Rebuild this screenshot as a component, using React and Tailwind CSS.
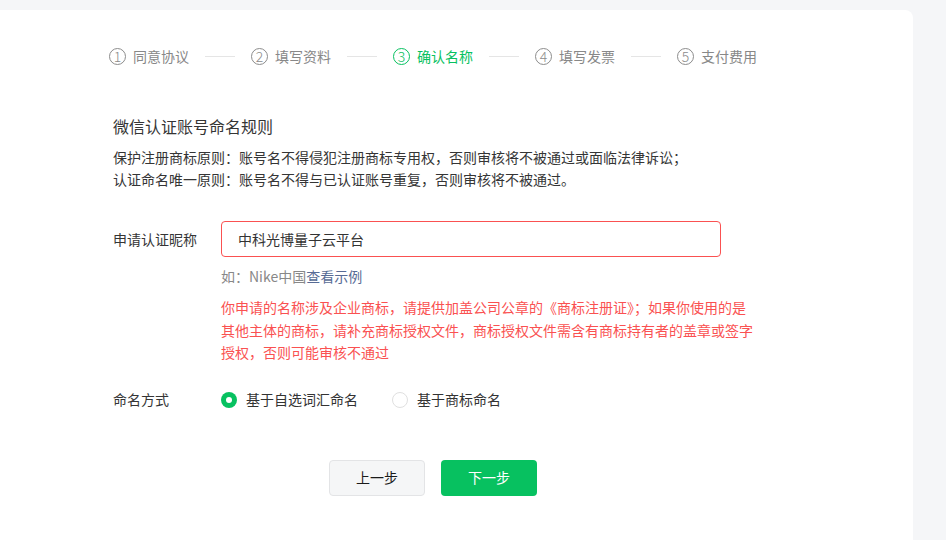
import React, { useState } from "react";

const steps = ["同意协议", "填写资料", "确认名称", "填写发票", "支付费用"];
const ACTIVE = 2;

const Steps = () => (
  <div className="flex items-center h-5">
    {steps.map((label, i) => {
      const active = i === ACTIVE;
      return (
        <div key={label} className="flex items-center">
          <span
            className={`flex items-center justify-center w-[17px] h-[17px] rounded-full border text-[14px] leading-none font-light ${
              active ? "border-[#07c160] text-[#07c160]" : "border-[#8c8c8c] text-[#8c8c8c]"
            }`}
          >
            {i + 1}
          </span>
          <span className={`ml-[7px] text-[14px] ${active ? "text-[#07c160]" : "text-[#888]"}`}>{label}</span>
          {i < steps.length - 1 && <span className="mx-4 w-[30px] h-px bg-[#e5e5e5]" />}
        </div>
      );
    })}
  </div>
);

const Radio = ({ checked, label, onClick }) => (
  <button onClick={onClick} className="flex items-center gap-[9px] text-[14px] text-[#333]">
    {checked ? (
      <span className="flex items-center justify-center w-4 h-4 rounded-full bg-[#07c160]">
        <span className="w-[6px] h-[6px] rounded-full bg-white" />
      </span>
    ) : (
      <span className="w-4 h-4 rounded-full border border-[#e0e0e0] bg-white" />
    )}
    {label}
  </button>
);

export default function App() {
  const [name, setName] = useState("中科光博量子云平台");
  const [mode, setMode] = useState("word");

  return (
    <div
      className="h-[540px] overflow-hidden bg-[#f5f6f8] pt-[10px] pr-[33px] flex"
      style={{ fontFamily: '"Noto Sans CJK SC", "Noto Sans", sans-serif' }}
    >
      <div className="flex-1 bg-white rounded-tr-[8px]">
        <div className="ml-[109px] w-[648px] pt-[36px]">
          <Steps />

          <div className="px-1">
            {/* 命名规则 */}
            <h2 className="mt-[48px] text-[16px] leading-6 text-[#353535]">微信认证账号命名规则</h2>
            <div className="mt-[8px] text-[14px] leading-[22px] text-[#353535]">
              <p>保护注册商标原则：账号名不得侵犯注册商标专用权，否则审核将不被通过或面临法律诉讼；</p>
              <p>认证命名唯一原则：账号名不得与已认证账号重复，否则审核将不被通过。</p>
            </div>

            {/* 昵称 */}
            <div className="mt-[31px] flex">
              <label className="w-[108px] text-[14px] leading-[36px] text-[#353535]">申请认证昵称</label>
              <div className="flex-1">
                <input
                  value={name}
                  onChange={(e) => setName(e.target.value)}
                  className="w-[500px] h-[36px] px-4 rounded-[4px] border border-[#fa5151] text-[14px] text-[#333] outline-none"
                />
                <p className="mt-[8px] text-[14px] leading-[22px] text-[#888]">
                  如：Nike中国<a className="text-[#576b95] cursor-pointer">查看示例</a>
                </p>
                <p className="mt-[9px] text-[14px] leading-[22.5px] text-[#fa5151]">
                  你申请的名称涉及企业商标，请提供加盖公司公章的《商标注册证》；如果你使用的是
                  <br />
                  其他主体的商标，请补充商标授权文件，商标授权文件需含有商标持有者的盖章或签字
                  <br />
                  授权，否则可能审核不通过
                </p>
              </div>
            </div>

            {/* 命名方式 */}
            <div className="mt-[25px] flex items-center h-[22px]">
              <span className="w-[108px] text-[14px] text-[#353535]">命名方式</span>
              <div className="flex items-center gap-[34px]">
                <Radio checked={mode === "word"} label="基于自选词汇命名" onClick={() => setMode("word")} />
                <Radio checked={mode === "brand"} label="基于商标命名" onClick={() => setMode("brand")} />
              </div>
            </div>

            {/* 按钮 */}
            <div className="mt-[49px] flex justify-center gap-4">
              <button className="w-[96px] h-[36px] rounded-[4px] border border-[#e3e4e6] bg-[#f5f6f7] text-[14px] text-[#1a1a1a]">
                上一步
              </button>
              <button className="w-[96px] h-[36px] rounded-[4px] bg-[#07c160] text-[14px] text-white">下一步</button>
            </div>
          </div>
        </div>
      </div>
    </div>
  );
}
